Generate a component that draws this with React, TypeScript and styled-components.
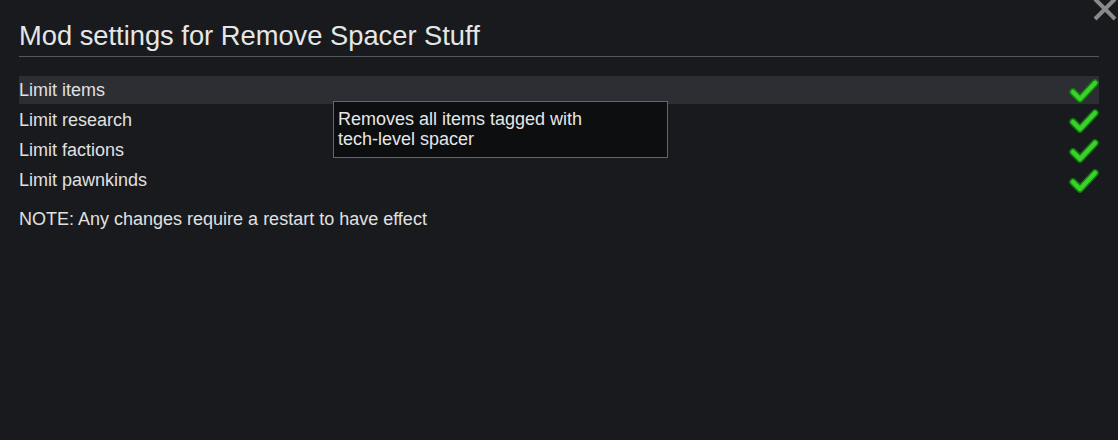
import React from 'react';
import styled, { createGlobalStyle } from 'styled-components';

const GlobalStyle = createGlobalStyle`
  html, body {
    margin: 0;
    padding: 0;
    background: #181a1e;
  }
  body {
    font-family: 'Liberation Sans', Arial, sans-serif;
    color: #dcdcdc;
  }
`;

const Window = styled.div`
  position: relative;
  width: 1118px;
  height: 440px;
  box-sizing: border-box;
  padding: 19px 19px 0 19px;
  background: #181a1e;
  overflow: hidden;
`;

const Title = styled.h1`
  margin: 0;
  font-size: 27.3px;
  font-weight: normal;
  line-height: 33px;
  color: #e6e6e6;
  padding-bottom: 4px;
  border-bottom: 1px solid #55575b;
`;

const List = styled.div`
  display: flex;
  flex-direction: column;
  margin-top: 19px;
`;

const Row = styled.div<{ $hover?: boolean }>`
  display: flex;
  align-items: center;
  justify-content: space-between;
  height: 28px;
  margin-bottom: 2px;
  font-size: 18px;
  line-height: 26px;
  background: ${(p) => (p.$hover ? '#2c2e33' : 'transparent')};
`;

const Label = styled.span`
  color: #e0e0e0;
  margin-top: -1px;
`;

const Note = styled.div`
  margin-top: 13px;
  font-size: 18px;
  color: #e0e0e0;
`;

const Tooltip = styled.div`
  position: absolute;
  left: 333px;
  top: 101px;
  width: 335px;
  height: 57px;
  box-sizing: border-box;
  padding: 7px 4px;
  background: #0c0e10;
  border: 1px solid #5f6872;
  font-size: 18px;
  line-height: 20px;
  color: #e6e6e6;
`;

const Close = styled.button`
  position: absolute;
  top: -4px;
  right: 0;
  width: 26px;
  height: 26px;
  padding: 0;
  border: none;
  background: none;
  cursor: pointer;
`;

const Check = () => (
  <svg width="30" height="26" viewBox="0 0 30 26">
    <path d="M4 15 L11 22 L26 6" fill="none" stroke="#137a12" strokeWidth="7.5" strokeLinecap="round" strokeLinejoin="round" />
    <path d="M4 15 L11 22 L26 6" fill="none" stroke="#3ad22a" strokeWidth="4.5" strokeLinecap="round" strokeLinejoin="round" />
  </svg>
);

const settings = ['Limit items', 'Limit research', 'Limit factions', 'Limit pawnkinds'];

export default function App() {
  return (
    <>
      <GlobalStyle />
      <Window>
        <Close aria-label="Close">
          <svg width="26" height="26" viewBox="0 0 26 26">
            <path d="M3 3 L23 23 M23 3 L3 23" stroke="#8a8a8a" strokeWidth="4" />
          </svg>
        </Close>
        <Title>Mod settings for Remove Spacer Stuff</Title>
        <List>
          {settings.map((s, i) => (
            <Row key={s} $hover={i === 0}>
              <Label>{s}</Label>
              <Check />
            </Row>
          ))}
        </List>
        <Note>NOTE: Any changes require a restart to have effect</Note>
        <Tooltip>
          Removes all items tagged with
          <br />
          tech-level spacer
        </Tooltip>
      </Window>
    </>
  );
}
